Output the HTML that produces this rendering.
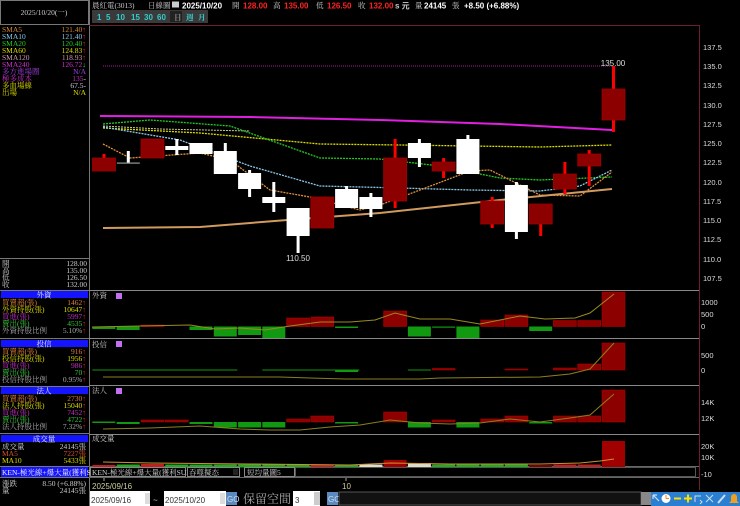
<!DOCTYPE html>
<html><head><meta charset="utf-8">
<style>
html,body{margin:0;padding:0;background:#000;width:740px;height:506px;overflow:hidden}
svg{display:block}
text{font-family:"Liberation Sans","Noto Sans CJK TC",sans-serif;font-size:8px}
.c{font-family:"Liberation Serif","Noto Serif CJK SC","Noto Sans CJK TC",serif;font-size:7.5px}
.ax{fill:#ddd;font-size:7.5px}
</style></head><body>
<svg width="740" height="506" viewBox="0 0 740 506" xmlns="http://www.w3.org/2000/svg">
<rect width="740" height="506" fill="#000"/>

<!-- LEFT PANEL -->
<g stroke="#777" stroke-width="1" fill="none">
<rect x="0.5" y="0.5" width="88" height="24"/>
<line x1="0" y1="258.5" x2="89" y2="258.5"/>
<line x1="0" y1="290.5" x2="89" y2="290.5"/>
<line x1="0" y1="338.5" x2="89" y2="338.5"/>
<line x1="0" y1="386.5" x2="89" y2="386.5"/>
<line x1="0" y1="433.5" x2="89" y2="433.5"/>
<line x1="0" y1="466.5" x2="89" y2="466.5"/>
<line x1="0" y1="477.5" x2="89" y2="477.5"/>
<line x1="89.5" y1="0" x2="89.5" y2="506"/>
</g>
<text x="44" y="15" class="c" fill="#ccc" text-anchor="middle">2025/10/20(一)</text>

<g class="c">
<text x="2" y="32" class="c" fill="#d08a30">SMA5</text><text x="86" y="32" class="c" fill="#d08a30" text-anchor="end">121.40<tspan fill="#f22">↑</tspan></text>
<text x="2" y="39" class="c" fill="#8cc8e8">SMA10</text><text x="86" y="39" class="c" fill="#8cc8e8" text-anchor="end">121.40<tspan fill="#f22">↑</tspan></text>
<text x="2" y="46" class="c" fill="#2c2">SMA20</text><text x="86" y="46" class="c" fill="#2c2" text-anchor="end">120.40<tspan fill="#f22">↑</tspan></text>
<text x="2" y="53" class="c" fill="#dd0">SMA60</text><text x="86" y="53" class="c" fill="#dd0" text-anchor="end">124.83<tspan fill="#f22">↑</tspan></text>
<text x="2" y="60" class="c" fill="#c9a">SMA120</text><text x="86" y="60" class="c" fill="#c9a" text-anchor="end">118.93<tspan fill="#f22">↑</tspan></text>
<text x="2" y="67" class="c" fill="#c3c">SMA240</text><text x="86" y="67" class="c" fill="#c3c" text-anchor="end">126.72<tspan fill="#2e2">↓</tspan></text>
<text x="2" y="74" class="c" fill="#a040e0">多方進場圈</text><text x="86" y="74" class="c" fill="#a040e0" text-anchor="end">N/A</text>
<text x="2" y="81" class="c" fill="#c030c0">極多成本</text><text x="86" y="81" class="c" fill="#c030c0" text-anchor="end">135<tspan fill="#ccc">-</tspan></text>
<text x="2" y="88" class="c" fill="#dd0">多血場線</text><text x="86" y="88" class="c" fill="#ccc" text-anchor="end">67.5-</text>
<text x="2" y="95" class="c" fill="#dd0">出場</text><text x="86" y="95" class="c" fill="#dd0" text-anchor="end">N/A</text>
</g>

<text x="2" y="266" class="c" fill="#ccc">開</text><text x="87" y="266" class="c" fill="#ccc" text-anchor="end">128.00</text>
<text x="2" y="273" class="c" fill="#ccc">高</text><text x="87" y="273" class="c" fill="#ccc" text-anchor="end">135.00</text>
<text x="2" y="280" class="c" fill="#ccc">低</text><text x="87" y="280" class="c" fill="#ccc" text-anchor="end">126.50</text>
<text x="2" y="287" class="c" fill="#ccc">收</text><text x="87" y="287" class="c" fill="#ccc" text-anchor="end">132.00</text>

<!-- 外資 -->
<rect x="1" y="291" width="87" height="7" fill="#1414ff"/>
<text x="44" y="297.5" class="c" fill="#eee" text-anchor="middle">外資</text>
<text x="2" y="305" class="c" fill="#e0803a">買賣超(張)</text><text x="86" y="305" class="c" fill="#e0803a" text-anchor="end">1462<tspan fill="#f22">↑</tspan></text>
<text x="2" y="312" class="c" fill="#dd0">外資持股(張)</text><text x="86" y="312" class="c" fill="#dd0" text-anchor="end">10647<tspan fill="#f22">↑</tspan></text>
<text x="2" y="319" class="c" fill="#c030c0">買進(張)</text><text x="86" y="319" class="c" fill="#c030c0" text-anchor="end">5997<tspan fill="#f22">↑</tspan></text>
<text x="2" y="326" class="c" fill="#3c3">賣出(張)</text><text x="86" y="326" class="c" fill="#3c3" text-anchor="end">4535<tspan fill="#f22">↑</tspan></text>
<text x="2" y="333" class="c" fill="#aaa">外資持股比例</text><text x="86" y="333" class="c" fill="#aaa" text-anchor="end">5.10%<tspan fill="#f22">↑</tspan></text>

<!-- 投信 -->
<rect x="1" y="340" width="87" height="7" fill="#1414ff"/>
<text x="44" y="346.5" class="c" fill="#eee" text-anchor="middle">投信</text>
<text x="2" y="354" class="c" fill="#e0803a">買賣超(張)</text><text x="86" y="354" class="c" fill="#e0803a" text-anchor="end">916<tspan fill="#f22">↑</tspan></text>
<text x="2" y="361" class="c" fill="#dd0">投信持股(張)</text><text x="86" y="361" class="c" fill="#dd0" text-anchor="end">1956<tspan fill="#f22">↑</tspan></text>
<text x="2" y="368" class="c" fill="#c030c0">買進(張)</text><text x="86" y="368" class="c" fill="#c030c0" text-anchor="end">986<tspan fill="#f22">↑</tspan></text>
<text x="2" y="375" class="c" fill="#3c3">賣出(張)</text><text x="86" y="375" class="c" fill="#3c3" text-anchor="end">70<tspan fill="#f22">↑</tspan></text>
<text x="2" y="382" class="c" fill="#aaa">投信持股比例</text><text x="86" y="382" class="c" fill="#aaa" text-anchor="end">0.95%<tspan fill="#f22">↑</tspan></text>

<!-- 法人 -->
<rect x="1" y="387" width="87" height="7" fill="#1414ff"/>
<text x="44" y="393.5" class="c" fill="#eee" text-anchor="middle">法人</text>
<text x="2" y="401" class="c" fill="#e0803a">買賣超(張)</text><text x="86" y="401" class="c" fill="#e0803a" text-anchor="end">2730<tspan fill="#f22">↑</tspan></text>
<text x="2" y="408" class="c" fill="#dd0">法人持股(張)</text><text x="86" y="408" class="c" fill="#dd0" text-anchor="end">15040<tspan fill="#f22">↑</tspan></text>
<text x="2" y="415" class="c" fill="#c030c0">買進(張)</text><text x="86" y="415" class="c" fill="#c030c0" text-anchor="end">7452<tspan fill="#f22">↑</tspan></text>
<text x="2" y="422" class="c" fill="#3c3">賣出(張)</text><text x="86" y="422" class="c" fill="#3c3" text-anchor="end">4722<tspan fill="#f22">↑</tspan></text>
<text x="2" y="429" class="c" fill="#aaa">法人持股比例</text><text x="86" y="429" class="c" fill="#aaa" text-anchor="end">7.32%<tspan fill="#f22">↑</tspan></text>

<!-- 成交量 -->
<rect x="1" y="435" width="87" height="7" fill="#1414ff"/>
<text x="44" y="441.5" class="c" fill="#eee" text-anchor="middle">成交量</text>
<text x="2" y="449" class="c" fill="#ccc">成交量</text><text x="86" y="449" class="c" fill="#ccc" text-anchor="end">24145張</text>
<text x="2" y="456" class="c" fill="#e05030">MA5</text><text x="86" y="456" class="c" fill="#e05030" text-anchor="end">7227張</text>
<text x="2" y="463" class="c" fill="#dd0">MA10</text><text x="86" y="463" class="c" fill="#dd0" text-anchor="end">5433張</text>

<rect x="1" y="467" width="87" height="10" fill="#1414ff"/>
<text x="2" y="475" class="c" fill="#eee">KEN-極光線+爆大量(獲利SUP)</text>
<text x="2" y="486" class="c" fill="#ccc">漲跌</text><text x="86" y="486" class="c" fill="#ccc" text-anchor="end">8.50 (+6.88%)</text>
<text x="2" y="493" class="c" fill="#ccc">量</text><text x="86" y="493" class="c" fill="#ccc" text-anchor="end">24145張</text>

<!-- TOP BAR -->
<text x="92" y="8" class="c" fill="#ccc">晨紅電(3013)</text>
<text x="148" y="8" class="c" fill="#ccc">日線圖</text>
<rect x="172" y="1.5" width="7" height="6" fill="#ccc"/>
<text x="182" y="8.5" fill="#fff" font-weight="bold" font-size="9">2025/10/20</text>
<text x="232" y="8" class="c" fill="#ccc">開</text><text x="243" y="8.5" fill="#f22" font-weight="bold">128.00</text>
<text x="273" y="8" class="c" fill="#ccc">高</text><text x="284" y="8.5" fill="#f22" font-weight="bold">135.00</text>
<text x="316" y="8" class="c" fill="#ccc">低</text><text x="327" y="8.5" fill="#f22" font-weight="bold">126.50</text>
<text x="358" y="8" class="c" fill="#ccc">收</text><text x="369" y="8.5" fill="#f22" font-weight="bold">132.00</text>
<text x="395" y="8.5" fill="#ccc" font-weight="bold" font-size="7">s 元</text>
<text x="415" y="8" class="c" fill="#ccc">量</text>
<text x="424" y="8.5" fill="#fff" font-weight="bold">24145</text>
<text x="452" y="8" class="c" fill="#ccc">張</text>
<text x="464" y="8.5" fill="#fff" font-weight="bold">+8.50 (+6.88%)</text>

<g font-size="8" font-weight="bold" fill="#3cc">
<rect x="92" y="10" width="116" height="13" fill="#3a3a3a"/>
<rect x="170" y="11" width="12" height="11" fill="#222"/>
<text x="97" y="20" fill="#3cc">1</text>
<text x="106" y="20" fill="#3cc">5</text>
<text x="116" y="20" fill="#3cc">10</text>
<text x="131" y="20" fill="#3cc">15</text>
<text x="144" y="20" fill="#3cc">30</text>
<text x="157" y="20" fill="#3cc">60</text>
<text x="174" y="20" class="c" fill="#888">日</text>
<text x="186" y="20" class="c" fill="#3cc">週</text>
<text x="198" y="20" class="c" fill="#3cc">月</text>
</g>

<!-- MAIN CHART FRAME -->
<line x1="89" y1="25.5" x2="699" y2="25.5" stroke="#6a2030"/>
<line x1="699.5" y1="25" x2="699.5" y2="490" stroke="#6a2030"/>
<g stroke="#888" stroke-width="1">
<line x1="89" y1="290.5" x2="699" y2="290.5"/>
<line x1="89" y1="338.5" x2="699" y2="338.5"/>
<line x1="89" y1="385.5" x2="699" y2="385.5"/>
<line x1="89" y1="434.5" x2="699" y2="434.5"/>
<line x1="89" y1="466.5" x2="699" y2="466.5" stroke="#666"/>
<line x1="89" y1="477.5" x2="699" y2="477.5" stroke="#666"/>
</g>

<g class="ax">
<text x="703" y="50" class="ax">137.5</text>
<text x="703" y="69" class="ax">135.0</text>
<text x="703" y="88" class="ax">132.5</text>
<text x="703" y="108" class="ax">130.0</text>
<text x="703" y="127" class="ax">127.5</text>
<text x="703" y="146" class="ax">125.0</text>
<text x="703" y="165" class="ax">122.5</text>
<text x="703" y="185" class="ax">120.0</text>
<text x="703" y="204" class="ax">117.5</text>
<text x="703" y="223" class="ax">115.0</text>
<text x="703" y="242" class="ax">112.5</text>
<text x="703" y="262" class="ax">110.0</text>
<text x="703" y="281" class="ax">107.5</text>
<text x="701" y="305" class="ax">1000</text>
<text x="701" y="317" class="ax">500</text>
<text x="701" y="329" class="ax">0</text>
<text x="701" y="358" class="ax">500</text>
<text x="701" y="373" class="ax">0</text>
<text x="701" y="405" class="ax">14K</text>
<text x="701" y="421" class="ax">12K</text>
<text x="701" y="449" class="ax">20K</text>
<text x="701" y="460" class="ax">10K</text>
<text x="701" y="477" class="ax">-10</text>
</g>

<!-- moving averages -->
<line x1="103" y1="66" x2="612" y2="66" stroke="#a020a0" stroke-dasharray="1,1"/>
<polyline fill="none" stroke="#e020e0" stroke-width="2" points="100,116 250,117 380,120 500,124 612,130"/>
<polyline fill="none" stroke="#dd0" stroke-width="1.3" stroke-dasharray="2,1" points="103,128 200,133 320,144 400,145 540,147 612,145"/>
<polyline fill="none" stroke="#cc9" stroke-width="1" stroke-dasharray="2,1" points="103,126 160,129 250,131"/>
<polyline fill="none" stroke="#2c2" stroke-width="1.3" stroke-dasharray="2,1" points="103,124 150,120 230,126 320,158 380,159 440,166 500,178 540,180 612,177"/>
<polyline fill="none" stroke="#8cc8e8" stroke-width="1.3" stroke-dasharray="2,1" points="103,127 180,140 250,166 320,186 400,188 470,190 540,191 580,186 612,170"/>
<polyline fill="none" stroke="#e0903a" stroke-width="1.3" stroke-dasharray="2,1" points="103,144 130,158 200,153 230,160 270,190 310,197 360,210 380,205 420,190 470,171 490,170 540,195 580,196 612,172"/>
<polyline fill="none" stroke="#d09a60" stroke-width="2" points="103,228 200,227 300,219 380,213 500,200 612,189"/>

<!-- candles -->
<g>
<g fill="#f00">
<rect x="102.5" y="154" width="3" height="17"/>
<rect x="151" y="139" width="3" height="19"/>
<rect x="320.8" y="197" width="3" height="31"/>
<rect x="393.6" y="139" width="3" height="69"/>
<rect x="442.1" y="158" width="3" height="20"/>
<rect x="490.7" y="197" width="3" height="31"/>
<rect x="539.2" y="204" width="3" height="32"/>
<rect x="563.4" y="162" width="3" height="32"/>
<rect x="587.7" y="150" width="3" height="36"/>
<rect x="612" y="66" width="3" height="66"/>
</g>
<g fill="#fff">
<rect x="126.8" y="151" width="3" height="12"/>
<rect x="175.3" y="139" width="3" height="16"/>
<rect x="223.8" y="143" width="3" height="31"/>
<rect x="248.1" y="170" width="3" height="27"/>
<rect x="272.3" y="182" width="3" height="30"/>
<rect x="296.6" y="208" width="3" height="45"/>
<rect x="345.1" y="186" width="3" height="22"/>
<rect x="369.4" y="193" width="3" height="24"/>
<rect x="417.9" y="139" width="3" height="28"/>
<rect x="466.4" y="135" width="3" height="39"/>
<rect x="514.9" y="182" width="3" height="57"/>
</g>
<g fill="#8c0000" stroke="#a00000" stroke-width="0.8">
<rect x="92.5" y="158" width="23" height="13"/>
<rect x="141" y="139" width="23" height="19"/>
<rect x="310.8" y="197" width="23" height="31"/>
<rect x="383.6" y="158" width="23" height="43"/>
<rect x="432.1" y="162" width="23" height="9"/>
<rect x="480.7" y="201" width="23" height="23"/>
<rect x="529.2" y="204" width="23" height="20"/>
<rect x="553.4" y="174" width="23" height="15"/>
<rect x="577.7" y="154" width="23" height="12"/>
<rect x="602" y="89" width="23" height="31"/>
</g>
<g fill="#fff">
<rect x="116.8" y="162.5" width="23" height="1.2" fill="#999"/>
<rect x="165.3" y="146" width="23" height="4"/>
<rect x="189.5" y="143" width="23" height="11"/>
<rect x="213.8" y="151" width="23" height="23"/>
<rect x="238.1" y="173" width="23" height="16"/>
<rect x="262.3" y="197" width="23" height="6"/>
<rect x="286.6" y="208" width="23" height="28"/>
<rect x="335.1" y="189" width="23" height="19"/>
<rect x="359.4" y="197" width="23" height="12"/>
<rect x="407.9" y="143" width="23" height="15"/>
<rect x="456.4" y="139" width="23" height="35"/>
<rect x="504.9" y="185" width="23" height="47"/>
</g>
</g>
<text x="613" y="66" fill="#ddd" font-size="8" text-anchor="middle">135.00</text>
<text x="298" y="261" fill="#ddd" font-size="8" text-anchor="middle">110.50</text>

<!-- 外資 panel -->
<text x="92" y="298" class="c" fill="#ccc">外資</text>
<rect x="116" y="293" width="6" height="6" fill="#c070f0"/>
<g fill="#119911">
<rect x="92.3" y="326.5" width="23" height="2.5"/>
<rect x="116.6" y="326.5" width="23" height="3.5"/>
<rect x="189.5" y="326.5" width="23" height="3.5"/>
<rect x="213.8" y="326.5" width="23" height="10"/>
<rect x="238.1" y="326.5" width="23" height="8.5"/>
<rect x="262.3" y="326.5" width="23" height="11.5"/>
<rect x="335.1" y="326.5" width="23" height="1.5"/>
<rect x="407.9" y="326.5" width="23" height="10"/>
<rect x="432.1" y="326.5" width="23" height="1.2"/>
<rect x="456.4" y="326.5" width="23" height="11.5"/>
<rect x="529.2" y="326.5" width="23" height="4.5"/>
</g>
<g fill="#8c0000" stroke="#a00" stroke-width="0.6">
<rect x="141" y="325" width="23" height="1.5"/>
<rect x="286.6" y="318" width="23" height="8.5"/>
<rect x="310.8" y="317" width="23" height="9.5"/>
<rect x="383.6" y="311" width="23" height="15.5"/>
<rect x="480.7" y="320" width="23" height="6.5"/>
<rect x="504.9" y="315" width="23" height="11.5"/>
<rect x="553.4" y="320.5" width="23" height="6"/>
<rect x="577.7" y="320.5" width="23" height="6"/>
<rect x="602" y="292" width="23" height="34.5"/>
</g>
<polyline fill="none" stroke="#9a8a20" points="92,327 140,326 190,325 215,329 240,328 265,330 290,326 320,322 350,322 375,320 395,313 420,319 450,319 480,324 500,320 520,316 545,319 575,318 590,313 614,294"/>

<!-- 投信 panel -->
<text x="92" y="347" class="c" fill="#ccc">投信</text>
<rect x="116" y="341" width="6" height="6" fill="#c070f0"/>
<g fill="#119911">
<rect x="92.3" y="369.5" width="145" height="1"/>
<rect x="262.3" y="369.5" width="97" height="1"/>
<rect x="335.1" y="370" width="23" height="2"/>
<rect x="407.9" y="369.5" width="23" height="1"/>
</g>
<g fill="#8c0000" stroke="#a00" stroke-width="0.6">
<rect x="432.1" y="368.5" width="23" height="1.5"/>
<rect x="504.9" y="369" width="23" height="1"/>
<rect x="553.4" y="368" width="23" height="2"/>
<rect x="577.7" y="364" width="23" height="6"/>
<rect x="602" y="343" width="23" height="27"/>
</g>
<polyline fill="none" stroke="#8a8020" points="103,377 280,377 310,378 345,379 420,379 440,378 540,377 570,374 590,369 614,343"/>

<!-- 法人 panel -->
<text x="92" y="393" class="c" fill="#ccc">法人</text>
<rect x="116" y="388" width="6" height="6" fill="#c070f0"/>
<g fill="#119911">
<rect x="92.3" y="421.5" width="23" height="1.5"/>
<rect x="116.6" y="422" width="23" height="2"/>
<rect x="189.5" y="422" width="23" height="2"/>
<rect x="213.8" y="422" width="23" height="5.5"/>
<rect x="238.1" y="422" width="23" height="5.5"/>
<rect x="262.3" y="422" width="23" height="5.5"/>
<rect x="335.1" y="422" width="23" height="1.5"/>
<rect x="407.9" y="422" width="23" height="5.5"/>
<rect x="456.4" y="422" width="23" height="5.5"/>
<rect x="529.2" y="422" width="23" height="1.5"/>
</g>
<g fill="#8c0000" stroke="#a00" stroke-width="0.6">
<rect x="141" y="420" width="23" height="2"/>
<rect x="165.3" y="420" width="23" height="2"/>
<rect x="286.6" y="419" width="23" height="3"/>
<rect x="310.8" y="416" width="23" height="6"/>
<rect x="383.6" y="412" width="23" height="10"/>
<rect x="432.1" y="420" width="23" height="2"/>
<rect x="480.7" y="419" width="23" height="3"/>
<rect x="504.9" y="416" width="23" height="6"/>
<rect x="553.4" y="416" width="23" height="6"/>
<rect x="577.7" y="416" width="23" height="6"/>
<rect x="602" y="390" width="23" height="32"/>
</g>
<polyline fill="none" stroke="#8a8020" points="103,429 150,428 200,426 240,429 270,430 300,430 330,427 360,425 390,420 420,423 450,424 480,423 510,419 540,422 570,418 590,415 614,394"/>

<!-- volume panel -->
<text x="92" y="441" class="c" fill="#ccc">成交量</text>
<g fill="#22aa22">
<rect x="116.8" y="464.5" width="23" height="3"/>
<rect x="165.3" y="464.5" width="23" height="3"/>
<rect x="189.5" y="464.5" width="23" height="3"/>
<rect x="213.8" y="464.5" width="23" height="3"/>
<rect x="238.1" y="464.5" width="23" height="3"/>
<rect x="262.3" y="464.5" width="23" height="3"/>
<rect x="286.6" y="464.5" width="23" height="3"/>
<rect x="335.1" y="464.5" width="23" height="3"/>
<rect x="432.1" y="464.5" width="23" height="3"/>
<rect x="456.4" y="464.5" width="23" height="3"/>
<rect x="480.7" y="464.5" width="23" height="3"/>
<rect x="504.9" y="464.5" width="23" height="3"/>
</g>
<g fill="#ddc">
<rect x="359.4" y="464.5" width="23" height="3"/>
<rect x="407.9" y="463" width="23" height="4.5"/>
</g>
<g fill="#a00000">
<rect x="92.5" y="465" width="23" height="2.5" fill="#c02020"/>
<rect x="141" y="464" width="23" height="3.5" fill="#c02020"/>
<rect x="310.8" y="465" width="23" height="2.5" fill="#c02020"/>
<rect x="383.6" y="460" width="23" height="7.5"/>
<rect x="529.2" y="465" width="23" height="2.5" fill="#700"/>
<rect x="553.4" y="464.5" width="23" height="3" fill="#c02020"/>
<rect x="577.7" y="464.5" width="23" height="3" fill="#c02020"/>
<rect x="602" y="441" width="23" height="26.5"/>
</g>
<polyline fill="none" stroke="#d09030" points="103,462 150,463 250,464 350,465 390,463 450,464 540,464 580,463 600,461 614,459"/>

<!-- indicator bar -->
<rect x="90.5" y="467.5" width="95" height="9" fill="#000" stroke="#888"/>
<text x="92" y="475" class="c" fill="#ccc">KEN-極光線+爆大量(獲利SUP)</text>
<rect x="187.5" y="467.5" width="52" height="9" fill="#000" stroke="#888"/>
<text x="189" y="475" class="c" fill="#ccc">吞噬擬态</text>
<rect x="233" y="469" width="5" height="6" fill="#222"/>
<rect x="244.5" y="467.5" width="50" height="9" fill="#000" stroke="#888"/>
<text x="247" y="475" class="c" fill="#ccc">短均量圖5</text>
<rect x="295.5" y="467.5" width="400" height="9" fill="#000" stroke="#555"/>

<!-- date axis -->
<line x1="104" y1="478" x2="104" y2="481" stroke="#aa8"/>
<line x1="346" y1="478" x2="346" y2="481" stroke="#aa8"/>
<text x="92" y="489" fill="#cc9" font-size="8">2025/09/16</text>
<text x="342" y="489" fill="#cc9" font-size="7">10</text>

<!-- bottom bar -->
<rect x="90" y="491" width="60" height="15" fill="#fff"/>
<text x="91" y="503" fill="#333" font-size="10">2025/09/16</text>
<rect x="145" y="493" width="5" height="11" fill="#ddd"/>
<text x="153" y="503" fill="#ccc" font-size="10">~</text>
<rect x="164" y="491" width="62" height="15" fill="#fff"/>
<text x="165" y="503" fill="#333" font-size="10">2025/10/20</text>
<rect x="220" y="493" width="5" height="11" fill="#ddd"/>
<rect x="226" y="492" width="11" height="13" fill="#5a8ac0"/>
<text x="227" y="502" fill="#cde" font-size="7">GO</text>
<text x="243" y="503" class="c" fill="#aaa" style="font-size:12px">保留空間</text>
<rect x="293" y="491" width="27" height="15" fill="#fff"/>
<text x="295" y="503" fill="#333" font-size="10">3</text>
<rect x="314" y="492" width="6" height="13" fill="#ccc"/>
<rect x="327" y="492" width="11" height="13" fill="#5a8ac0"/>
<text x="328" y="502" fill="#cde" font-size="7">GO</text>
<rect x="339" y="492" width="302" height="13" fill="#111" stroke="#555"/>
<rect x="641" y="492" width="10" height="13" fill="#888"/>
<g>
<rect x="651" y="492" width="89" height="14" fill="#2a7fd0"/>
<path d="M653,495 L659,501 M653,495 h4 M653,495 v4" stroke="#cde" stroke-width="1.2" fill="none"/>
<circle cx="666" cy="498.5" r="4.5" fill="#fff"/><path d="M666,498.5 L666,495 M666,498.5 L669,498.5" stroke="#f80"/>
<rect x="674" y="497.5" width="7" height="2" fill="#fd0"/>
<path d="M684,498.5 h8 M688,494.5 v8" stroke="#fd0" stroke-width="2"/>
<path d="M695,502 v-6 h6 M700,500 l2,2 l-2,2" stroke="#cde" fill="none"/>
<path d="M706,495 l7,7 M713,495 l-7,7" stroke="#cde" fill="none"/>
<path d="M718,503 l7,-8" stroke="#cde" stroke-width="2"/>
<path d="M729,503 h10 l-2,-2 v-4 a3,3 0 0 0 -6,0 v4 z" fill="#f0a020"/>
</g>
</svg>
</body></html>
